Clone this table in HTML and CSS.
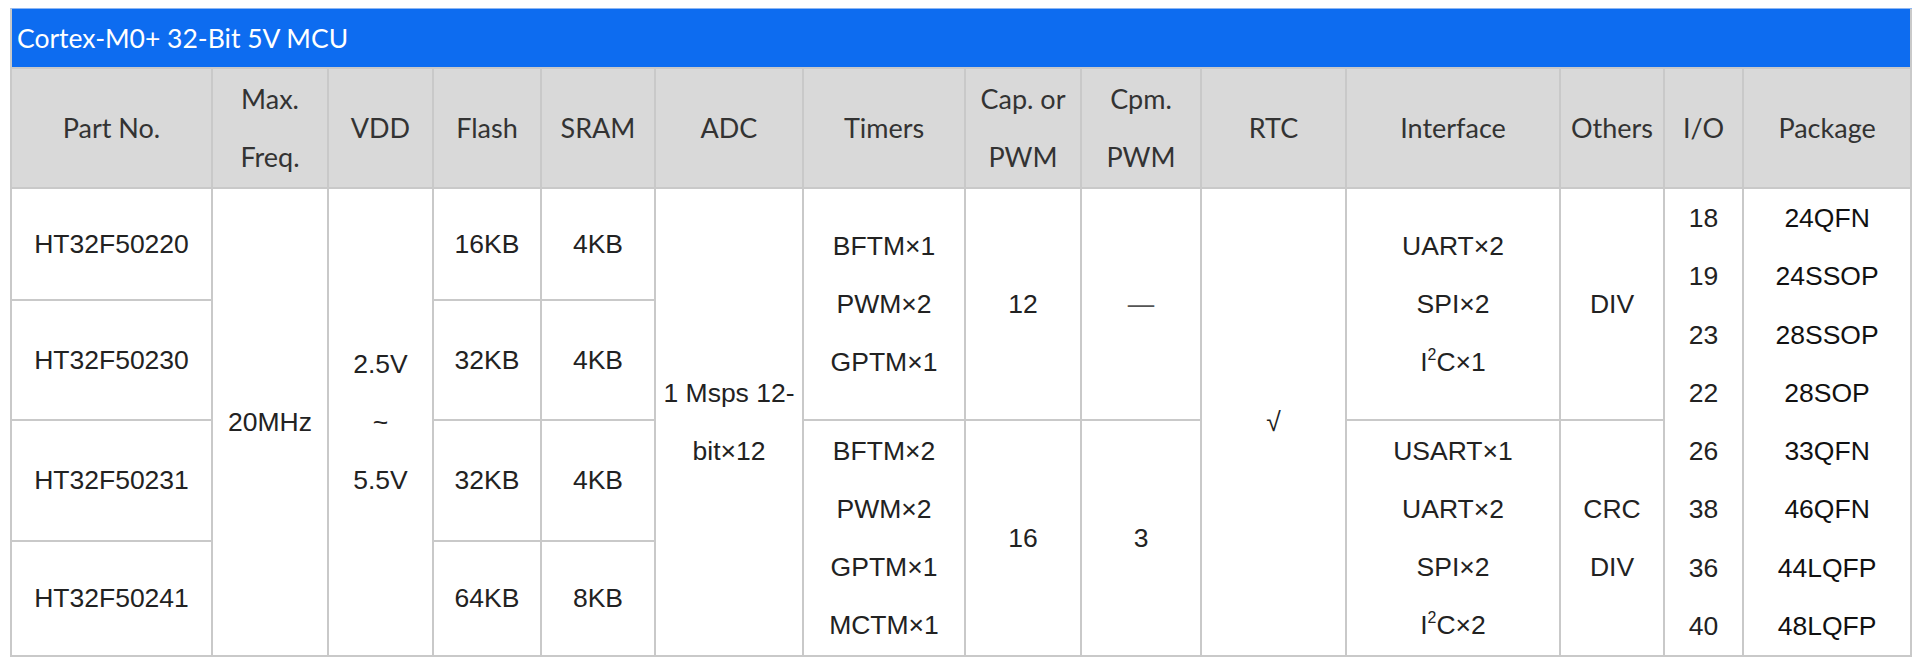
FILE: index.html
```html
<!DOCTYPE html>
<html lang="en">
<head>
<meta charset="utf-8">
<title>Cortex-M0+ 32-Bit 5V MCU</title>
<link rel="stylesheet" href="styles.css">
</head>
<body>
<div class="wrap">
<table class="spec">
<colgroup>
<col class="c-part"><col class="c-freq"><col class="c-vdd"><col class="c-flash"><col class="c-sram"><col class="c-adc"><col class="c-timers"><col class="c-cap"><col class="c-cpm"><col class="c-rtc"><col class="c-if"><col class="c-others"><col class="c-io"><col class="c-pkg">
</colgroup>
<thead>
<tr class="title-row"><th colspan="14" class="title">Cortex-M0+ 32-Bit 5V MCU</th></tr>
<tr class="head-row">
<th>Part No.</th>
<th>Max.<br>Freq.</th>
<th>VDD</th>
<th>Flash</th>
<th>SRAM</th>
<th>ADC</th>
<th>Timers</th>
<th>Cap. or<br>PWM</th>
<th>Cpm.<br>PWM</th>
<th>RTC</th>
<th>Interface</th>
<th>Others</th>
<th>I/O</th>
<th>Package</th>
</tr>
</thead>
<tbody>
<tr class="r1">
<td>HT32F50220</td>
<td rowspan="4">20MHz</td>
<td rowspan="4">2.5V<br>~<br>5.5V</td>
<td>16KB</td>
<td>4KB</td>
<td rowspan="4">1 Msps 12-<br>bit×12</td>
<td rowspan="2">BFTM×1<br>PWM×2<br>GPTM×1</td>
<td rowspan="2">12</td>
<td rowspan="2" class="dash">—</td>
<td rowspan="4">√</td>
<td rowspan="2">UART×2<br>SPI×2<br>I<sup>2</sup>C×1</td>
<td rowspan="2">DIV</td>
<td rowspan="4" class="io">18<br>19<br>23<br>22<br>26<br>38<br>36<br>40</td>
<td rowspan="4" class="pkg">24QFN<br>24SSOP<br>28SSOP<br>28SOP<br>33QFN<br>46QFN<br>44LQFP<br>48LQFP</td>
</tr>
<tr class="r2">
<td>HT32F50230</td>
<td>32KB</td>
<td>4KB</td>
</tr>
<tr class="r3">
<td>HT32F50231</td>
<td>32KB</td>
<td>4KB</td>
<td rowspan="2">BFTM×2<br>PWM×2<br>GPTM×1<br>MCTM×1</td>
<td rowspan="2">16</td>
<td rowspan="2">3</td>
<td rowspan="2">USART×1<br>UART×2<br>SPI×2<br>I<sup>2</sup>C×2</td>
<td rowspan="2">CRC<br>DIV</td>
</tr>
<tr class="r4">
<td>HT32F50241</td>
<td>64KB</td>
<td>8KB</td>
</tr>
</tbody>
</table>
</div>
</body>
</html>
```

FILE: styles.css
```css
html, body {
  margin: 0;
  padding: 0;
  background: #ffffff;
}

.wrap {
  padding: 8px 8px 0 10px;
}

.spec {
  width: 1902px;
  table-layout: fixed;
  border-collapse: separate;
  border-spacing: 0;
  border-left: 2px solid #c9c9c9;
  border-top: 1px solid #8db6f2;
  color: #333333;
}

.c-part { width: 201px; }
.c-freq { width: 116px; }
.c-vdd { width: 105px; }
.c-flash { width: 108px; }
.c-sram { width: 114px; }
.c-adc { width: 148px; }
.c-timers { width: 162px; }
.c-cap { width: 116px; }
.c-cpm { width: 120px; }
.c-rtc { width: 145px; }
.c-if { width: 214px; }
.c-others { width: 104px; }
.c-io { width: 79px; }
.c-pkg { width: 168px; }

.spec th,
.spec td {
  padding: 0;
  text-align: center;
  vertical-align: middle;
  border-right: 2px solid #c9c9c9;
  border-bottom: 2px solid #c9c9c9;
  overflow: hidden;
}

.title-row .title {
  height: 58px;
  line-height: 58px;
  background: #0d6cf0;
  color: #ffffff;
  text-align: left;
  padding-left: 5px;
  font-family: Lato, "Noto Sans", sans-serif;
  font-weight: 400;
  font-size: 26.5px;
}

.head-row th {
  height: 118px;
  background: #d9d9d9;
  font-family: Lato, "Noto Sans", sans-serif;
  font-weight: 400;
  font-size: 27px;
  line-height: 58.5px;
  color: #333333;
}

.spec td {
  font-family: "Liberation Sans", Arial, sans-serif;
  font-size: 26.5px;
  line-height: 58.25px;
  color: #222222;
}

.spec td sup {
  font-size: 0.6em;
  line-height: 0;
  vertical-align: 0.7em;
}

.r1 { height: 112px; }
.r2 { height: 120px; }
.r3 { height: 121px; }
.r4 { height: 115px; }

.spec td.dash {
  color: #555555;
}

.spec td.pkg {
  color: #111111;
}
```
